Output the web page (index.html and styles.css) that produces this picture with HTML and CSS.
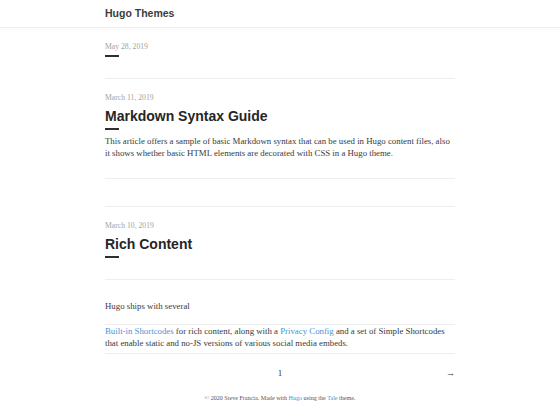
FILE: index.html
```html
<!DOCTYPE html>
<html lang="en">
<head>
<meta charset="utf-8">
<title>Hugo Themes</title>
<link rel="stylesheet" href="styles.css">
</head>
<body>
<header class="site-header">
  <div class="wrap">
    <a class="brand" href="#">Hugo Themes</a>
  </div>
</header>
<main class="wrap posts">
  <article class="post post-first">
    <div class="date">May 28, 2019</div>
    <span class="dash"></span>
  </article>
  <hr class="rule rule-after-first">

  <article class="post">
    <div class="date">March 11, 2019</div>
    <h2 class="title">Markdown Syntax Guide</h2>
    <span class="dash"></span>
    <p class="summary">This article offers a sample of basic Markdown syntax that can be used in Hugo content files, also<br>it shows whether basic HTML elements are decorated with CSS in a Hugo theme.</p>
  </article>
  <hr class="rule rule-summary-end">
  <hr class="rule rule-sep">

  <article class="post">
    <div class="date">March 10, 2019</div>
    <h2 class="title">Rich Content</h2>
    <span class="dash"></span>
    <hr class="rule rule-title-end">
    <p class="summary lead">Hugo ships with several</p>
    <hr class="rule rule-mid">
    <p class="summary"><a href="#">Built-in Shortcodes</a> for rich content, along with a <a href="#">Privacy Config</a> and a set of Simple Shortcodes<br>that enable static and no-JS versions of various social media embeds.</p>
    <hr class="rule rule-end">
  </article>

  <nav class="pagination">
    <span class="pg-spacer"></span>
    <span class="pg-num">1</span>
    <a class="pg-next" href="#">→</a>
  </nav>
</main>
<footer class="site-footer">
  © 2020 Steve Francia. Made with <a href="#">Hugo</a> using the <a href="#">Tale</a> theme.
</footer>
</body>
</html>
```
FILE: styles.css
```css
html, body {
  margin: 0;
  padding: 0;
  background: #fff;
}
body {
  font-family: "Liberation Serif", "Times New Roman", serif;
  color: #3a3a3a;
}
a {
  color: #4a94d6;
  text-decoration: none;
}
.wrap {
  width: 350px;
  margin: 0 auto;
}
.site-header {
  height: 27px;
  border-bottom: 1px solid #efefef;
  box-shadow: 0 1px 2px rgba(0, 0, 0, 0.03);
}
.site-header .wrap {
  height: 26px;
  display: flex;
  align-items: center;
}
.brand {
  font-family: "Liberation Sans", Arial, sans-serif;
  font-weight: bold;
  font-size: 10.5px;
  color: #3c3c3c;
  line-height: 12px;
}
.posts {
  display: flex;
  flex-direction: column;
}
.post {
  display: flex;
  flex-direction: column;
  align-items: flex-start;
}
.date {
  font-size: 7.7px;
  line-height: 12px;
  color: #a3a3a3;
  margin-top: 13px;
}
.post-first .date {
  margin-top: 13px;
}
.title {
  font-family: "Liberation Sans", Arial, sans-serif;
  font-weight: bold;
  font-size: 14px;
  line-height: 18px;
  color: #262626;
  margin: 3px 0 0;
}
.dash {
  display: block;
  width: 14px;
  height: 2px;
  background: #2e2e2e;
  margin-top: 3px;
}
.post-first .dash {
  margin-top: 2px;
}
.summary {
  font-size: 8.8px;
  line-height: 12px;
  margin: 5px 0 0;
  color: #3a3a3a;
}
.rule {
  border: 0;
  height: 1px;
  background: #efefef;
  margin: 0;
  width: 100%;
  align-self: stretch;
}
.rule-after-first { margin-top: 21px; }
.rule-summary-end { margin-top: 19px; }
.rule-sep { margin-top: 27px; }
.rule-title-end { margin-top: 21px; }
.summary.lead { margin-top: 20px; }
.rule-mid { margin-top: 12px; }
.rule-mid + .summary { margin-top: 0; }
.rule-end { margin-top: 4px; }
.pagination {
  margin-top: 13px;
  display: grid;
  grid-template-columns: 1fr auto 1fr;
  align-items: center;
  font-size: 9px;
  line-height: 12px;
  color: #333;
}
.pg-num {
  text-align: center;
  color: #333;
}
.pg-next {
  justify-self: end;
  color: #333;
}
.site-footer {
  margin-top: 13px;
  text-align: center;
  font-size: 6.1px;
  line-height: 12px;
  color: #555;
}
```
